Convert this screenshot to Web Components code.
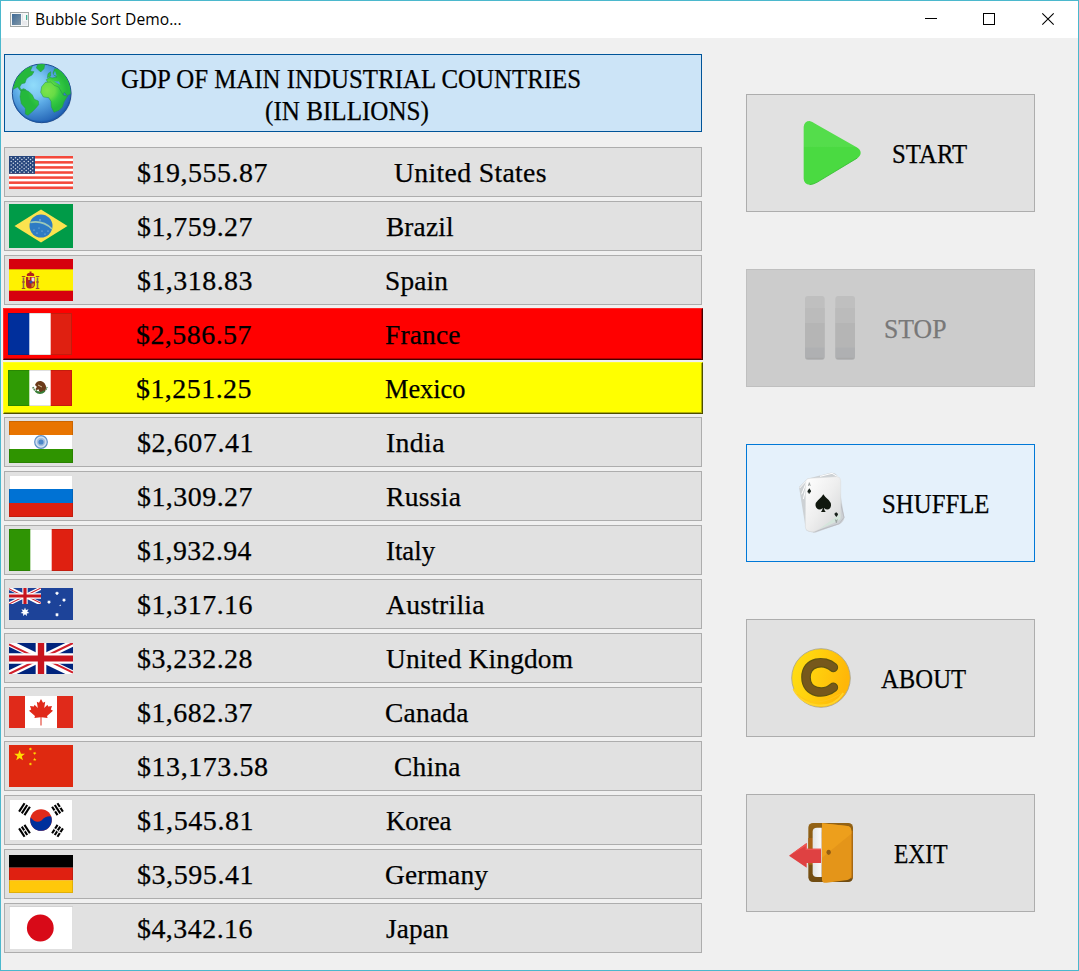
<!DOCTYPE html>
<html lang="en">
<head>
<meta charset="utf-8">
<title>Bubble Sort Demo...</title>
<style>
html,body{margin:0;height:100%;overflow:hidden;background:#f0f0f0}
</style>
</head>
<body>
<sort-window></sort-window>
<script>
const SERIF = '27px "Liberation Serif"';
const ctx = document.createElement('canvas').getContext('2d');

// A single line of text whose ink spans exactly [w] pixels: half of any
// missing width goes between the letters, the rest into the letters.
class FitText extends HTMLElement {
  connectedCallback() {
    const font = this.getAttribute('font') || SERIF;
    const root = this.attachShadow({mode: 'open'});
    root.innerHTML = `<style>
      :host{display:block;white-space:pre;height:32px}
      span{display:inline-block;font:${font},serif;line-height:32px;transform-origin:0 50%;-webkit-text-stroke:var(--stroke,.25px)}
    </style><span><slot></slot></span>`;
    ctx.font = font;
    const m = ctx.measureText(this.textContent);
    const w = +this.getAttribute('w');
    let ink = m.actualBoundingBoxRight + m.actualBoundingBoxLeft;
    const gaps = this.textContent.length - 1;
    const ls = Math.max(0, (w - ink) / 2 / gaps);
    ink += ls * gaps;
    const s = w / ink;
    const span = root.querySelector('span');
    span.style.letterSpacing = ls + 'px';
    span.style.transform = `translateX(${m.actualBoundingBoxLeft * s}px) scaleX(${s})`;
  }
}
customElements.define('fit-text', FitText);

const star = (cx, cy, r, n = 5, k = .4, rot = 0) => {
  let p = '';
  for (let i = 0; i < n * 2; i++) {
    const a = Math.PI * i / n - Math.PI / 2 + rot, q = i % 2 ? r * k : r;
    p += (cx + q * Math.cos(a)).toFixed(2) + ',' + (cy + q * Math.sin(a)).toFixed(2) + ' ';
  }
  return `<polygon points="${p}"/>`;
};
const R = (x, y, w, h, f) => `<rect x="${x}" y="${y}" width="${w}" height="${h}" fill="${f}"/>`;
const edge = (y, h) => `<rect x=".5" y="${y + .5}" width="63" height="${h - 1}" fill="none" stroke="#000" stroke-opacity=".12"/>`;

function usStars() {
  let s = '';
  for (let r = 0; r < 9; r++) for (let c = 0; c < (r % 2 ? 5 : 6); c++)
    s += `<circle cx="${2.2 + c * 4.3 + (r % 2 ? 2.1 : 0)}" cy="${9.8 + r * 1.82}" r=".75"/>`;
  return `<g fill="#d5deea">${s}</g>`;
}
function mapleLeaf() {
  const half = [[0,11],[2,14.8],[4.2,13.8],[3.2,20],[6.4,16.8],[7.2,18.6],[11,18],[9.8,21.6],[12,22.8],[6,28],[6.6,30],[.5,29.2],[.5,37.5]];
  const all = half.concat(half.slice(1).reverse().map(([x, y]) => [-x, y]));
  return `<polygon points="${all.map(([x, y]) => (32 + x) + ',' + y).join(' ')}" fill="#e02a1a"/>`;
}
function trigram(x, y, a, broken) {
  let s = '';
  [-3.2, 0, 3.2].forEach((d, i) => {
    s += `<rect x="-5" y="${d - 1.05}" width="10" height="2.1"/>`;
    if (broken[i]) s += `<rect x="-.6" y="${d - 1.2}" width="1.2" height="2.4" fill="#fff"/>`;
  });
  return `<g transform="translate(${x} ${y}) rotate(${a})">${s}</g>`;
}
const unionJack = `
  <path d="M0 0L60 30M60 0L0 30" stroke="#fff" stroke-width="6.4"/>
  <path d="M0 1.3L28 15.3M60 28.7L32 14.7M60 0L32 14M0 30L28 16" stroke="#d0202c" stroke-width="2"/>
  <path d="M30 0V30M0 15H60" stroke="#fff" stroke-width="10"/>
  <path d="M30 0V30M0 15H60" stroke="#c8141e" stroke-width="6"/>`;

const FLAGS = {
  us: R(0,8,64,33,'#fff') + [0,1,2,3,4,5,6].map(i => R(0, 8 + i * 5.08, 64, 2.54, '#f4483a')).join('') + R(0,8,26,17.8,'#26457c') + usStars(),
  br: R(0,2,64,44,'#009b48') + `<path d="M32 7.5L58.5 24L32 40.5L5.5 24Z" fill="#fbe34f"/><circle cx="32" cy="24" r="11.5" fill="#2e7bc4"/><path d="M21.2 20.5Q34 18 43 27" fill="none" stroke="#9cc9b8" stroke-width="1.7"/><g fill="#a9d0ef"><circle cx="25" cy="28" r=".6"/><circle cx="28" cy="31" r=".6"/><circle cx="33" cy="29" r=".6"/><circle cx="36" cy="32" r=".6"/><circle cx="39" cy="29" r=".6"/><circle cx="30" cy="26" r=".5"/><circle cx="31" cy="18" r=".7"/></g>`,
  es: R(0,3,64,42,'#d6000e') + R(0,13,64,22,'#fff200') + `<path d="M0 13.5H64M0 34.5H64" stroke="#e3a900" stroke-width="1"/>
    <g fill="#b3231c"><path d="M17 21h9v7q0 4-4.500 4.500T17 28z"/><path d="M18 20q-1-2 1.500-3h4q2.500 1 1.500 3z"/><rect x="20.500" y="15.500" width="2" height="2"/></g>
    <path d="M19 21h2v3h-2z" fill="#e3a12e"/><path d="M22.500 21.500h3v4h-3z" fill="#eadfe7"/><circle cx="22" cy="26" r="1.600" fill="#3a4f9c"/><path d="M22.500 27.500h3l-1 3-2 1z" fill="#c98a23"/>
    <path d="M14.500 21.500v10.500M28.500 21.500v10.500" stroke="#8a6a50" stroke-width="1.600"/><path d="M12.800 20.500h3.500M26.800 20.500h3.500M12.800 32.500h3.500M26.800 32.500h3.500M13 26h3M27 26h3" stroke="#a5452b" stroke-width="1.200"/>`,
  fr: R(0,3,64,42,'#fff') + R(0,3,21.3,42,'#002f9c') + R(42.7,3,21.3,42,'#df2011') + edge(3,42),
  mx: R(0,6,64,36,'#fff') + R(0,6,21.3,36,'#2f9b04') + R(42.7,6,21.3,36,'#df2011') + edge(6,36) +
    `<path d="M25 23a7.300 7.300 0 0 0 14 0" fill="none" stroke="#5d8b5b" stroke-width="1.800" stroke-dasharray="1.600 .6"/><path d="M27 21q1.500-4.500 6-4q5 1.500 5 7q-1 5-4.500 4.500q-3-.5-2.500-3l-3 .5q-1-2 1-3z" fill="#6b3a1a"/><path d="M27.500 27q4.500 4 9 0" fill="none" stroke="#377d36" stroke-width="2"/><path d="M30 21l4 2" stroke="#d4bd98" stroke-width="1"/>`,
  in: R(0,3,64,14,'#e87400') + R(0,17,64,14,'#fff') + R(0,31,64,14,'#2f9400') + edge(3,42) + `<circle cx="32" cy="24" r="6.300" fill="#d3e1f0" stroke="#5d8fc6" stroke-width="1.200"/><circle cx="32" cy="24" r="4.200" fill="#a3c0e0"/><circle cx="32" cy="24" r="2.600" fill="#4c87c8"/>`,
  ru: R(0,3,64,14,'#fff') + R(0,17,64,14,'#0072d4') + R(0,31,64,14,'#df2011') + edge(3,42),
  it: R(0,3,64,42,'#fff') + R(0,3,21.3,42,'#2f9404') + R(42.7,3,21.3,42,'#df2011') + edge(3,42),
  au: R(0,8,64,32,'#1d4399') + `<svg x="0" y="8" width="32" height="16" viewBox="0 0 60 30" preserveAspectRatio="none">${unionJack}</svg><g fill="#fff">${star(16,32,4.5,7,.5)}${star(48,13.3,2,7,.6)}${star(40,22,2,7,.6)}${star(55,20,2,7,.6)}${star(51.2,25.300,1.1)}${star(48,34.700,2,7,.6)}</g>`,
  gb: `<svg y="9" width="64" height="31" viewBox="0 0 60 30" preserveAspectRatio="none"><rect width="60" height="30" fill="#00247d"/>${unionJack}</svg>`,
  ca: R(0,8,64,32,'#fff') + R(0,8,16,32,'#e02a1a') + R(48,8,16,32,'#e02a1a') + mapleLeaf(),
  cn: R(0,3,64,42,'#df2910') + `<g fill="#ffde00">${star(10.600,13.600,5.700)}${star(21.500,7,1.9,5,.4,.3)}${star(25.700,11.300,1.9,5,.4,.5)}${star(25.700,17.500,1.9)}${star(21.500,22,1.9,5,.4,.3)}</g>`,
  kr: R(0,3,64,42,'#fff') + edge(3,42) + `<circle cx="32" cy="24" r="10.800" fill="#df2a1a"/><path d="M21.500 21.500A10.800 10.800 0 1 0 42.200 20.500Q37 19.500 32.500 24.500Q27 28 21.500 21.500Z" fill="#002f9c"/>` +
    trigram(15.500,13.200,-57,[0,0,0]) + trigram(48.500,13.200,57,[1,0,1]) + trigram(15.500,34.800,57,[0,1,0]) + trigram(48.500,34.800,-57,[1,1,1]),
  de: R(0,5,64,12.700,'#000') + R(0,17.700,64,12.600,'#df2011') + R(0,30.300,64,12.700,'#ffc80a') + edge(5,38),
  jp: R(0,2.500,64,43.500,'#fff') + edge(2,44) + '<circle cx="31.300" cy="24" r="13.400" fill="#d80a18"/>'
};

class CountryFlag extends HTMLElement {
  connectedCallback() {
    this.attachShadow({mode: 'open'}).innerHTML = `<style>:host{display:block;width:64px;height:48px;flex:none}svg{display:block}</style>
      <svg width="64" height="48" viewBox="0 0 64 48">${FLAGS[this.getAttribute('code')]}</svg>`;
  }
}
customElements.define('country-flag', CountryFlag);

class CountryRow extends HTMLElement {
  connectedCallback() {
    const a = n => this.getAttribute(n);
    this.attachShadow({mode: 'open'}).innerHTML = `<style>
      :host{display:flex;align-items:center;box-sizing:border-box;height:50px;border:1px solid #adadad;background:#e1e1e1;padding-left:4px}
      :host([state]){height:52px;margin:-1px}
      :host([state=red]){background:#f00;border-color:#ff2828 #4a0000 #4a0000 #ff2828;box-shadow:inset -1px -1px #b40000}
      :host([state=yellow]){background:#ff0;border-color:#ffff28 #4e4e00 #4e4e00 #ffff28;box-shadow:inset -1px -1px #b0b000}
      fit-text{margin-top:2px}
      .amount{margin-left:64.500px;width:${a('x') || 248}px;flex:none}
    </style>
    <country-flag code="${a('code')}"></country-flag>
    <fit-text class="amount" w="${a('aw') || 114}">${a('amount')}</fit-text>
    <fit-text w="${a('nw')}">${this.textContent}</fit-text>`;
  }
}
customElements.define('country-row', CountryRow);

class GdpHeader extends HTMLElement {
  connectedCallback() {
    this.attachShadow({mode: 'open'}).innerHTML = `<style>
      :host{display:flex;box-sizing:border-box;height:78px;border:1px solid #005499;background:#cce4f7;padding-left:6px}
      svg{display:block;flex:none;margin-top:8px}
      .text{padding:8px 0 0 49.700px}
      .second{margin-left:144.300px}
    </style>
    <svg width="61" height="61" viewBox="34 190 183 183">
      <defs><radialGradient id="sea" cx=".36" cy=".36" r=".68"><stop offset="0" stop-color="#90dcfa"/><stop offset=".3" stop-color="#7cc6f3"/><stop offset=".5" stop-color="#5aa8e4"/><stop offset="1" stop-color="#2262b4"/></radialGradient>
      <radialGradient id="land" cx="142" cy="272" r="60" gradientUnits="userSpaceOnUse"><stop offset="0" stop-color="#7de34c"/><stop offset=".4" stop-color="#68dc46"/><stop offset=".65" stop-color="#37cb42"/><stop offset="1" stop-color="#25b83c"/></radialGradient>
      <clipPath id="disc"><circle cx="126" cy="280" r="87"/></clipPath></defs>
      <ellipse cx="127" cy="283" rx="89" ry="88" fill="#4a5a78" opacity=".35"/>
      <circle cx="126" cy="281" r="88" fill="url(#sea)" stroke="#1f4f93" stroke-width="3"/>
      <g clip-path="url(#disc)" fill="url(#land)" stroke="#249448" stroke-width="1.500">
        <path d="M38 270L50 235L78 205L98 200L92 214L103 216L97 226L88 231L80 238L76 250L66 252L60 262L64 270L72 267L78 270L70 276L62 273L54 262Z"/>
        <path d="M64 273L78 271L88 276L98 286L104 299L116 304L117 315L108 326L99 335L85 347L77 343L77 326L65 312L61 291Z"/>
        <path d="M114 194L136 192L133 207L123 217L117 211L110 205Z"/>
        <path d="M145 222L153 216L153 229L143 234ZM160 220L165 207L181 209L200 231L215 254L217 280L203 288L194 278L190 286L178 268L166 259L156 260L145 250L140 240L151 232L157 235L172 232L162 226Z"/>
        <path d="M137 248L153 247L164 257L177 262L191 287L204 289L193 307L188 322L178 332L163 338L155 322L154 305L147 294L131 292L123 278L126 261Z"/>
      </g>
      <path d="M161 225l10 3-5-15zM156 240q12 8 22 5l4 11" fill="#4a9fe0"/>
      <path d="M43 309Q67 366 125 366T209 308" fill="none" stroke="#1756a7" stroke-width="4" opacity=".5"/>
    </svg>
    <div class="text"><fit-text w="460">GDP OF MAIN INDUSTRIAL COUNTRIES</fit-text><fit-text class="second" w="162">(IN BILLIONS)</fit-text></div>`;
  }
}
customElements.define('gdp-header', GdpHeader);

const ICONS = {
  start: [30, `<defs><linearGradient id="g" x2="0" y2="1"><stop offset=".4" stop-color="#54dd4b"/><stop offset=".41" stop-color="#4ada41"/></linearGradient></defs>
    <path d="M191 125Q193 108 209 108Q216 109 227 117L350 187Q362 194 362 204T349 221L231 292Q220 299 209 299Q192 298 191 281Z" fill="url(#g)"/><path d="M352 219L231 292Q220 298 209 299" fill="none" stroke="#35bd31" stroke-width="2.500"/>`],
  stop: [30, [195, 286].map(x => `<rect x="${x}" y="108" width="59" height="191" rx="9" fill="#bfbfbf"/><rect x="${x}" y="144" width="59" height="45" fill="#bbb"/><rect x="${x}" y="189" width="59" height="73" fill="#b5b5b5"/><path d="M${x} 262h59v28q0 9-9 9h-41q-9 0-9-9z" fill="#afb0b2"/><path d="M${x+4} 295h51" stroke="#a7a7a7" stroke-width="3"/>`).join('')],
  shuffle: [30, `<defs><linearGradient id="c" x2="1" y2="1"><stop offset="0" stop-color="#fff"/><stop offset=".5" stop-color="#eee"/><stop offset="1" stop-color="#d2d4d5"/></linearGradient></defs>
    <path d="M177 156L202 131L272 113Q286 112 292 122L313 248Q312 258 300 267L225 293Q205 292 198 285Z" fill="#cdd1d4"/>
    <path d="M179 159L204 132M185 178L201 137M190 192L200 150M240 124L276 115L293 125" fill="none" stroke="#fff" stroke-width="3"/>
    <path d="M302 206L312 247L298 266L220 291" fill="none" stroke="#babcc2" stroke-width="3"/>
    <path d="M197 143Q197 131 210 130L290 125Q302 125 302 137V240Q302 254 291 259L222 290Q196 292 196 274Z" fill="url(#c)" stroke="#dadcdd" stroke-width="1.500"/>
    <path d="M301 236V252L291 259L238 282Z" fill="#d4e5db"/>
    <path d="M250 178Q256 188 266 195Q277 207 271 218Q263 229 252 219Q252 225 257 231H243Q248 225 248 219Q238 229 229 218Q222 207 234 196Q245 187 250 178Z" fill="#11180f"/>
    <path d="M208 160l5 7q1 6-4 6v3h-3v-3q-5 0-3-6zM289 246l5-7q0-6-4-5v-2h-3v2q-5 0-3 5z" fill="#17201a"/>
    <path d="M205 153l3-10 3 10m-5-4h4M286 253l3 10 3-10m-5 4h4" fill="none" stroke="#8b918f" stroke-width="2"/>`],
  about: [30, `<defs><linearGradient id="a" x2="1" y2=".25"><stop offset="0" stop-color="#ffdf14"/><stop offset=".45" stop-color="#ffd10d"/><stop offset="1" stop-color="#ffb708"/></linearGradient></defs>
    <circle cx="243" cy="204" r="88" fill="url(#a)" stroke="#aaa58e" stroke-width="2.500"/><path d="M160 237Q184 282 234 286T310 249" fill="none" stroke="#ffd42b" stroke-width="5"/><path d="M171 252Q221 300 301 252" fill="none" stroke="#ffc51a" stroke-width="3"/>
    <g fill="none" stroke-linecap="round"><path d="M280 172C254 149 198 152 198 202S254 255 280 232" stroke="#5f5310" stroke-width="29"/><path d="M280 172C254 149 198 152 198 202S254 255 280 232" stroke="#76581c" stroke-width="22"/></g>`],
  exit: [555, `<defs><linearGradient id="f" x2="0" y2="1"><stop offset="0" stop-color="#946315"/><stop offset="1" stop-color="#704c12"/></linearGradient><linearGradient id="w"><stop offset="0" stop-color="#e2e5e5"/><stop offset="1" stop-color="#fafafa"/></linearGradient></defs>
    <rect x="205" y="639" width="134" height="177" rx="14" fill="url(#f)"/><rect x="205" y="684" width="40" height="80" fill="#aa6517"/><path d="M334 662V805" stroke="#bc7414" stroke-width="8"/>
    <path d="M245 653H231Q218 653 218 665V790Q218 801 231 801H245Z" fill="url(#w)"/>
    <path d="M246 640L322 648Q334 650 334 663V796Q334 807 322 810L260 818Q246 820 246 809Z" fill="#e49519"/><path d="M246 640L322 648Q334 650 334 663V671L246 743Z" fill="#ed9f1c"/>
    <ellipse cx="266" cy="727" rx="6.500" ry="8" fill="#925d14"/>
    <path d="M147 737L200 699V716H243V759H200V773Z" fill="#df4142"/><path d="M147 737L200 699V716H243V720H197V708Z" fill="#ef5552"/>`]
};

class ActionButton extends HTMLElement {
  connectedCallback() {
    const [y, art] = ICONS[this.getAttribute('icon')];
    this.attachShadow({mode: 'open'}).innerHTML = `<style>
      :host{display:flex;align-items:center;box-sizing:border-box;width:289px;height:118px;border:1px solid #adadad;background:#e1e1e1;color:#000}
      :host([disabled]){background:#ccc;border-color:#bfbfbf;color:#787878}
      :host([hot]){background:#e5f1fb;border-color:#0078d7}
      svg{display:block;flex:none}
      fit-text{margin:2px 0 0 ${this.getAttribute('gap')}px}
    </style>
    <svg width="130" height="116" viewBox="21 ${y} 390 348">${art}</svg>
    <fit-text w="${this.getAttribute('w')}">${this.textContent}</fit-text>`;
  }
}
customElements.define('action-button', ActionButton);

class TitleBar extends HTMLElement {
  connectedCallback() {
    this.attachShadow({mode: 'open'}).innerHTML = `<style>
      :host{display:flex;height:37px;background:#fff;align-items:center;--stroke:0}
      svg{display:block;flex:none}
      .app{margin:0 7px 0 9px}
      fit-text{flex:1;margin-bottom:2px}
    </style>
    <svg class="app" width="19" height="16" viewBox="0 0 19 16"><defs><linearGradient id="b" x2="1" y2="1"><stop offset="0" stop-color="#3f6b98"/><stop offset="1" stop-color="#8197a6"/></linearGradient></defs><rect x=".5" y=".5" width="18" height="14" fill="#f5f7f7" stroke="#a3a8a6"/><rect x="2" y="2" width="9" height="11" fill="url(#b)"/><path d="M12.500 2v11" stroke="#dfe3e6"/><rect x="16" y="3" width="1.300" height="5" fill="#3fae93"/><rect x="12" y="9" width="5" height="4" fill="#e8e9ec"/></svg>
    <fit-text w="144.500" font='15.500px "Open Sans"'>${this.textContent}</fit-text>
    <svg width="176" height="37" viewBox="0 0 176 37" fill="none" stroke="#000" shape-rendering="crispEdges"><path d="M23 17.500h12"/><rect x="81.500" y="12.500" width="11" height="11"/><path d="M140.300 12.300l11.400 11.400m0-11.400l-11.400 11.400" shape-rendering="auto" stroke-width="1.100"/></svg>`;
  }
}
customElements.define('title-bar', TitleBar);

class SortWindow extends HTMLElement {
  connectedCallback() {
    this.attachShadow({mode: 'open'}).innerHTML = `<style>
      :host{display:block;box-sizing:border-box;width:1079px;height:971px;border:1px solid #4bb8cd;background:#f0f0f0}
      main{display:flex;align-items:flex-start}
      .list{display:flex;flex-direction:column;gap:4px;width:698px;margin:16px 0 0 3px}
      gdp-header{margin-bottom:11px}
      .actions{display:flex;flex-direction:column;gap:57px;margin:56px 0 0 44px}
    </style>
    <title-bar>Bubble Sort Demo...</title-bar>
    <main>
      <div class="list">
        <gdp-header></gdp-header>
        <country-row code="us" amount="$19,555.87" aw="129" x="256.5" nw="152">United States</country-row>
        <country-row code="br" amount="$1,759.27" nw="67">Brazil</country-row>
        <country-row code="es" amount="$1,318.83" nw="62.5">Spain</country-row>
        <country-row code="fr" amount="$2,586.57" nw="75.5" state="red">France</country-row>
        <country-row code="mx" amount="$1,251.25" nw="80" state="yellow">Mexico</country-row>
        <country-row code="in" amount="$2,607.41" nw="58.5">India</country-row>
        <country-row code="ru" amount="$1,309.27" nw="75">Russia</country-row>
        <country-row code="it" amount="$1,932.94" nw="49.5">Italy</country-row>
        <country-row code="au" amount="$1,317.16" nw="98.5">Austrilia</country-row>
        <country-row code="gb" amount="$3,232.28" nw="187">United Kingdom</country-row>
        <country-row code="ca" amount="$1,682.37" nw="82.5">Canada</country-row>
        <country-row code="cn" amount="$13,173.58" aw="129.5" x="257" nw="65.5">China</country-row>
        <country-row code="kr" amount="$1,545.81" nw="65.5">Korea</country-row>
        <country-row code="de" amount="$3,595.41" nw="102.5">Germany</country-row>
        <country-row code="jp" amount="$4,342.16" nw="63">Japan</country-row>
      </div>
      <div class="actions">
        <action-button icon="start" gap="16" w="74.5">START</action-button>
        <action-button icon="stop" gap="8" w="60.5" disabled>STOP</action-button>
        <action-button icon="shuffle" gap="6" w="106" hot>SHUFFLE</action-button>
        <action-button icon="about" gap="4" w="85.5">ABOUT</action-button>
        <action-button icon="exit" gap="17" w="54">EXIT</action-button>
      </div>
    </main>`;
  }
}
customElements.define('sort-window', SortWindow);
</script>
</body>
</html>
